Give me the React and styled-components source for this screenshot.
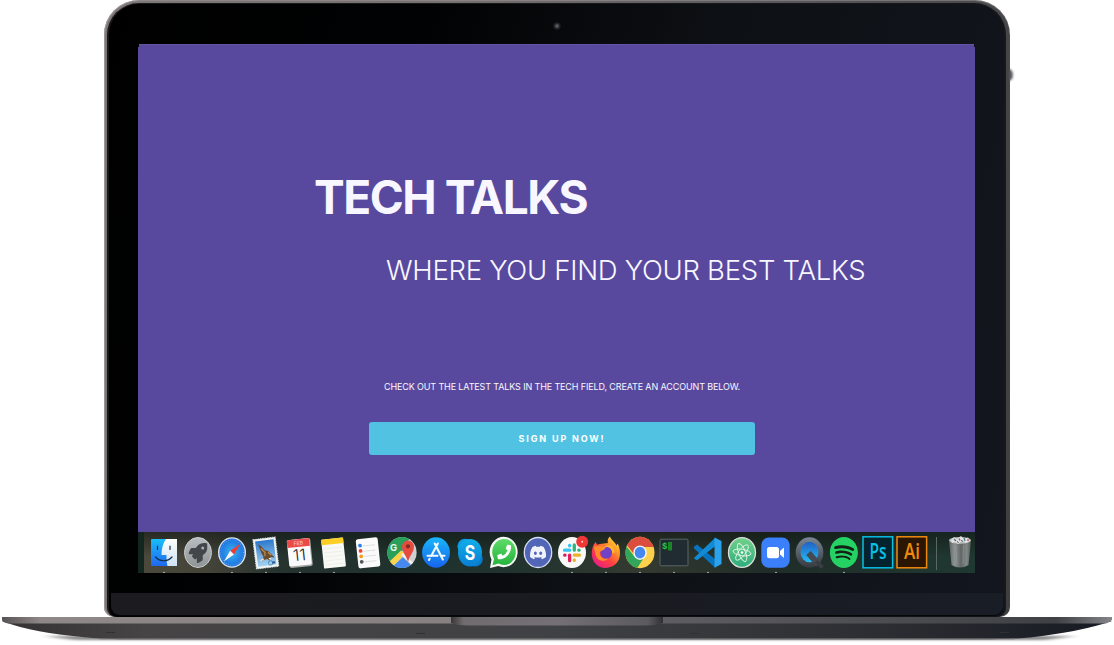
import React from "react";
import styled, { createGlobalStyle } from "styled-components";
import { FaDiscord, FaSpotify, FaPhoneAlt, FaRocket } from "react-icons/fa";

const GlobalStyle = createGlobalStyle`
  * { box-sizing: border-box; }
  body { margin: 0; background: #fff; overflow: hidden; font-family: Inter, "Liberation Sans", sans-serif; }
`;

const Laptop = styled.main`
  position: relative;
  width: 1114px;
  height: 645px;
  display: flex;
  flex-direction: column;
  align-items: center;
`;

const Lid = styled.section`
  width: 906px;
  height: 617px;
  padding: 3px 4px 0 3px;
  border-radius: 35px 35px 10px 10px;
  background: linear-gradient(100deg, #7d7676 0%, #766f70 35%, #5c5b5e 60%, #3d3e42 100%);
  box-shadow: inset 0 1px 1px #a19b9b80, inset 1px 0 1px #a09b9b;
`;

const Bezel = styled.div`
  width: 100%;
  height: 614px;
  display: flex;
  flex-direction: column;
  align-items: flex-start;
  padding: 40px 0 0 29px;
  border: solid #18181a;
  border-width: 1px 2px 0 2px;
  border-radius: 32px 32px 9px 9px;
  background: linear-gradient(105deg, #000 0%, #010203 30%, #0d1014 58%, #13161e 100%);
`;

const Camera = styled.span`
  position: absolute;
  left: 553px;
  top: 22px;
  width: 8px;
  height: 8px;
  border-radius: 50%;
  border: 1px solid #17191d;
  background: radial-gradient(circle, #555a61 0 1px, #24272c 2.5px);
`;

const Knob = styled.span`
  position: absolute;
  left: 1008px;
  top: 69px;
  width: 5px;
  height: 12px;
  border-radius: 0 5px 5px 0;
  background: linear-gradient(90deg, #3c3d40, #77777a);
  filter: blur(0.8px);
`;

const Screen = styled.div`
  width: 837px;
  height: 529px;
  flex: none;
  display: flex;
  flex-direction: column;
  background: #59499e;
  border-top: 1px solid #6253a4;
  clip-path: polygon(1px 0, 836px 0, 836px 3px, 100% 3px, 100% 100%, 0 100%, 0 3px, 1px 3px);
`;

const Hero = styled.div`
  height: 487px;
  display: flex;
  flex-direction: column;
  align-items: flex-start;
  padding-top: 124px;
  color: #f8f7ff;
  white-space: nowrap;
`;

const Title = styled.h1`
  margin: 0 0 0 176px;
  font-size: 46px;
  line-height: 56px;
  font-weight: 700;
  letter-spacing: -1.45px;
`;

const Subtitle = styled.h2`
  margin: 30px 0 0 248px;
  font-size: 27.5px;
  line-height: 30px;
  font-weight: 300;
  letter-spacing: -0.27px;
`;

const Note = styled.p`
  margin: 95px 0 0 246px;
  font-size: 9px;
  line-height: 14px;
  font-weight: 400;
  letter-spacing: -0.13px;
`;

const SignUp = styled.button`
  margin: 28px 0 0 231px;
  width: 386px;
  height: 33px;
  padding: 0;
  border: 0;
  border-radius: 3px;
  background: #51c2e2;
  color: #fff;
  font: 700 9px/33px Inter, sans-serif;
  letter-spacing: 1.85px;
`;

const Dock = styled.div`
  height: 41px;
  display: flex;
  padding-left: 9px;
  background:
    linear-gradient(90deg, #12251f 0 6px, transparent 6px),
    linear-gradient(180deg, #1117139c, transparent 60%),
    linear-gradient(90deg, #4c493c 0, #454439 8%, #26332f 17%, #1e322e 35%, #24342f 48%, #343a30 60%, #202d28 75%, #203832 100%);
`;

const Slot = styled.svg`
  width: 34px;
  height: 41px;
  flex: none;
  display: block;
  overflow: visible;
`;

const Divider = styled.i`
  flex: none;
  width: 1px;
  height: 33px;
  margin: 5px 6px 0 7px;
  background: #5a6762;
`;

const Chin = styled.div`
  width: 892px;
  height: 22px;
  flex: none;
  margin: 20px 0 0 -27px;
  border-radius: 0 0 9px 9px;
  background: linear-gradient(90deg, #1c1b20, #191b20 50%, #191d26);
  box-shadow: 0 1px 1px #050608;
`;

const Base = styled.svg`
  width: 1114px;
  height: 28px;
  flex: none;
  display: block;
`;

const Dot = () => <circle cx="17" cy="40.6" r="0.8" fill="#bcc4bf" />;

const Glyph = ({ icon: Icon, x, y, w, h, color }) => (
  <g transform={`translate(${x} ${y}) scale(${w / 20} ${h / 20})`}>
    <Icon size={20} color={color} />
  </g>
);

function Finder() {
  return (
    <Slot viewBox="0 0 34 41">
      <defs>
        <linearGradient id="fl" x2="0" y2="1"><stop stopColor="#19bdfb" /><stop offset="1" stopColor="#2168ef" /></linearGradient>
        <linearGradient id="fr" x2="0" y2="1"><stop stopColor="#fdfefe" /><stop offset="1" stopColor="#cfe2f5" /></linearGradient>
      </defs>
      <rect x="4" y="7" width="26" height="27" rx="1" fill="url(#fl)" />
      <path d="M19 7H30V34H20.5C19.6 30 19.4 27 19.5 23H14.5C14.6 16 16 11 19 7Z" fill="url(#fr)" />
      <path d="M10.5 14v3.5M23 14v3.5" stroke="#14324e" strokeWidth="1.2" strokeLinecap="round" />
      <path d="M8.5 25C13 30 20.5 30 25 25" fill="none" stroke="#122f4b" strokeWidth="1.2" strokeLinecap="round" />
      <Dot />
    </Slot>
  );
}

function Launchpad() {
  return (
    <Slot viewBox="0 0 34 41">
      <defs><linearGradient id="lp" x2="0" y2="1"><stop stopColor="#b8bdc0" /><stop offset="1" stopColor="#8f9496" /></linearGradient></defs>
      <ellipse cx="17" cy="20.5" rx="13.5" ry="15" fill="url(#lp)" stroke="#c9cdcf" />
      <Glyph icon={FaRocket} x={7.5} y={11} w={19} h={20} color="#43474b" />
    </Slot>
  );
}

function Safari() {
  return (
    <Slot viewBox="0 0 34 41">
      <defs><radialGradient id="sf"><stop stopColor="#38b5ee" /><stop offset="1" stopColor="#1c70e1" /></radialGradient></defs>
      <ellipse cx="17" cy="20.5" rx="14" ry="15.3" fill="#dfe4e8" />
      <ellipse cx="17" cy="20.5" rx="12.6" ry="14" fill="url(#sf)" />
      <ellipse cx="17" cy="20.5" rx="11.4" ry="12.7" fill="none" stroke="#9dd1f7" strokeWidth="1.1" strokeOpacity=".7" strokeDasharray=".6 1.6" />
      <path d="M25.5 11.5 15.2 18.8 19 22.5Z" fill="#f33b36" />
      <path d="M8.8 29.5 15.2 18.8 19 22.5Z" fill="#f4f6f8" />
      <Dot />
    </Slot>
  );
}

function Mail() {
  return (
    <Slot viewBox="0 0 34 41">
      <defs><linearGradient id="ml" x2="0" y2="1"><stop stopColor="#2d79cd" /><stop offset="1" stopColor="#a7d2ee" /></linearGradient></defs>
      <g transform="rotate(-7 17 20.5)">
        <rect x="5.5" y="6.2" width="22.5" height="29.5" fill="#f1f4f4" stroke="#d9e0e2" strokeWidth="1" strokeDasharray="1.4 1" />
        <rect x="7.5" y="8.3" width="18.5" height="25.3" fill="url(#ml)" />
        <path d="M10 11.5C13 13 14.5 16 16.5 18.5L19 19 22 22.5 25 26.5 21 25.5 19.5 29 17.5 27 12 28 14 24.5 12.5 21Z" fill="#6a4b2c" />
        <path d="M12.5 16 16 20.5 15.5 24M19 20.5 22 24" stroke="#b98c50" strokeWidth="1.3" fill="none" />
        <path d="M10.5 28l3.5-1.5M19 27l2.3.3" stroke="#f3e8d0" strokeWidth="1.3" />
        <circle cx="20.3" cy="31.4" r="2.2" fill="none" stroke="#4486b9" strokeWidth=".8" />
        <path d="M22 31.3h3" stroke="#285c97" strokeWidth="2.2" />
      </g>
      <Dot />
    </Slot>
  );
}

function Calendar() {
  return (
    <Slot viewBox="0 0 34 41">
      <g transform="rotate(-6 17 20.5)">
        <rect x="5.5" y="7" width="23" height="28" rx="2" fill="#a7a9a8" />
        <rect x="5" y="7" width="22.5" height="26.5" rx="1.5" fill="#fafafa" />
        <path d="M5 14.7V8.5Q5 7 6.5 7H26Q27.5 7 27.5 8.5V14.7Z" fill="#ea4b48" />
        <text x="16.2" y="12.9" fontSize="5.2" textAnchor="middle" fill="#ffd8d3">FEB</text>
        <text x="16.2" y="28.6" fontSize="16" fontWeight="300" textAnchor="middle" fill="#222" textLength="13" lengthAdjust="spacingAndGlyphs">11</text>
      </g>
      <Dot />
    </Slot>
  );
}

function Notes() {
  return (
    <Slot viewBox="0 0 34 41">
      <g transform="rotate(-6 17 20.5)">
        <rect x="5.5" y="6.5" width="22" height="29" rx="1" fill="#f8f8f5" />
        <path d="M5.5 6.5h22v5.5h-22Z" fill="#fdcf24" />
        <path d="M7 16h19M7 20h19M7 24h19M7 28h19M7 32h19" stroke="#e6e6e2" strokeWidth=".5" />
      </g>
      <Dot />
    </Slot>
  );
}

function Reminders() {
  return (
    <Slot viewBox="0 0 34 41">
      <g transform="rotate(-6 17 20.5)">
        <rect x="6" y="6.2" width="22" height="29.3" rx="2" fill="#fafafa" />
        <path d="M12.5 13.5h12M12.5 18.8h12M12.5 24h12M12.5 29.5h12" stroke="#d2d3d3" strokeWidth=".7" />
        <circle cx="9.8" cy="12.8" r="1.9" fill="#2582ed" />
        <circle cx="9.8" cy="18.2" r="1.9" fill="#ef4434" />
        <circle cx="9.8" cy="23.7" r="1.9" fill="#f49a20" />
        <circle cx="9.8" cy="29.1" r="1.9" fill="#54565a" />
      </g>
    </Slot>
  );
}

function Maps() {
  return (
    <Slot viewBox="0 0 34 41">
      <clipPath id="mp"><ellipse cx="17" cy="20.5" rx="14.6" ry="15.6" /></clipPath>
      <g clipPath="url(#mp)">
        <path d="M0 4H34V37H0Z" fill="#cfcfd0" />
        <path d="M0 4H26L16 21 4 32H0Z" fill="#2a9f5a" />
        <path d="M5 37 18 25 30 37Z" fill="#4589ee" />
        <path d="M2 32 16 18.5 20 22 6 36Z" fill="#fbd34b" />
        <path d="M17 22 32 36" stroke="#f0efef" strokeWidth="3" />
      </g>
      <path d="M23 31C22.2 24 17 20.5 17 14.5a6 6 0 0 1 12 0C29 20.5 23.8 24 23 31Z" fill="#e64c3e" />
      <circle cx="23" cy="14.3" r="2.1" fill="#812b25" />
      <text x="5" y="19.4" fontSize="9.5" fontWeight="700" fill="#e9f5ec">G</text>
    </Slot>
  );
}

function AppStore() {
  return (
    <Slot viewBox="0 0 34 41">
      <defs><linearGradient id="as" x2="0" y2="1"><stop stopColor="#19b7fb" /><stop offset="1" stopColor="#1764ed" /></linearGradient></defs>
      <ellipse cx="17" cy="20.5" rx="13.9" ry="15.3" fill="url(#as)" />
      <path d="M15.7 11.5 23.8 27.5M18.8 11.5 12.2 24M10.6 26.8 10 28M8.5 23.7h10M22 23.7h3.5" stroke="#f3faff" strokeWidth="2.1" strokeLinecap="round" fill="none" />
    </Slot>
  );
}

function Skype() {
  return (
    <Slot viewBox="0 0 34 41">
      <defs><linearGradient id="sk" x2="0" y2="1"><stop stopColor="#12aeea" /><stop offset="1" stopColor="#087fd3" /></linearGradient></defs>
      <circle cx="12" cy="14.3" r="7.6" fill="#0d9be2" /><circle cx="22.2" cy="27" r="7.6" fill="#0a79ca" />
      <ellipse cx="17" cy="20.7" rx="12" ry="13.7" fill="url(#sk)" />
      <text x="17" y="27.9" fontSize="20" fontWeight="700" textAnchor="middle" fill="#fff" textLength="10.5" lengthAdjust="spacingAndGlyphs">S</text>
    </Slot>
  );
}

function WhatsApp() {
  return (
    <Slot viewBox="0 0 34 41">
      <defs><linearGradient id="wa" x2="0" y2="1"><stop stopColor="#5fdb69" /><stop offset="1" stopColor="#24b33c" /></linearGradient></defs>
      <path d="M3 36 4.5 27.5A14 15.2 0 1 1 11.3 34Z" fill="#f5f7f5" />
      <path d="M5.5 33.2 7 27A11.8 13.1 0 1 1 11.5 31.6Z" fill="url(#wa)" />
      <g transform="translate(34.5 0) scale(-1 1)">
        <Glyph icon={FaPhoneAlt} x={10.3} y={12.5} w={14} h={15} color="#fff" />
      </g>
    </Slot>
  );
}

function Discord() {
  return (
    <Slot viewBox="0 0 34 41">
      <ellipse cx="17" cy="20.5" rx="13.7" ry="15" fill="#5266b8" stroke="#d7dcf1" strokeWidth="1.3" />
      <Glyph icon={FaDiscord} x={8.3} y={11} w={17.5} h={19} color="#f1f3fb" />
    </Slot>
  );
}

function Slack() {
  return (
    <Slot viewBox="0 0 34 41">
      <ellipse cx="17" cy="20.5" rx="14" ry="15.4" fill="#f9f9f8" />
      <g strokeWidth="3.3" strokeLinecap="round">
        <path d="M14.6 13.5v.3M9.5 18.2h5.2" stroke="#36c5f0" />
        <path d="M19.3 13v5.2M23.8 18.2h.3" stroke="#2eb67d" />
        <path d="M9.7 23.2h.3M14.6 23.2v5.5" stroke="#e01e5a" />
        <path d="M19.3 23.2h5.2M19.3 28v.4" stroke="#ecb22e" />
      </g>
      <circle cx="27.2" cy="9.7" r="6" fill="#ef3735" /><circle cx="27.2" cy="9.7" r="1" fill="#ffd5cc" />
      <Dot />
    </Slot>
  );
}

function Firefox() {
  return (
    <Slot viewBox="0 0 34 41">
      <defs><linearGradient id="ff" x1="1" x2=".2" y2="1"><stop stopColor="#fff34a" /><stop offset=".35" stopColor="#ff9827" /><stop offset=".65" stopColor="#ff4242" /><stop offset="1" stopColor="#e81a87" /></linearGradient></defs>
      <path d="M4.5 13 6.7 10 8 12.7 11 12 19 11C18 8.5 19 6 21 4.5 22 8 25.5 9.5 27.5 13.5L28.7 11.5C32 18 32 27 27 31.8 21.5 37.3 11.5 37.3 6.5 31.7 2 27 2 19 4.5 13Z" fill="url(#ff)" />
      <ellipse cx="17.3" cy="20.5" rx="5.8" ry="6.3" fill="#7042c8" />
      <path d="M4.7 14.5 11 14 17 15.3 14.5 18 11 19.5C9.5 24 14 28 19.5 26.5 14.5 31 7.5 28.5 6.5 22Z" fill="#ff8c28" />
      <path d="M14 16C18 13.5 24 16 23 21.5L25.8 20C25 13 19 11 14 16Z" fill="#ffb52e" />
      <Dot />
    </Slot>
  );
}

function Chrome() {
  return (
    <Slot viewBox="0 0 34 41">
      <clipPath id="ch"><ellipse cx="17" cy="20.5" rx="14.5" ry="15.7" /></clipPath>
      <g clipPath="url(#ch)">
        <path d="M0 4h34v34H0Z" fill="#fdd14b" />
        <path d="M0 10 11 24 20 27 13 38H0Z" fill="#32a65a" />
        <path d="M3 12 0 3H34V15H17L11 22Z" fill="#db4d3f" />
      </g>
      <ellipse cx="17" cy="20.7" rx="6.7" ry="7.3" fill="#f5f7f8" /><ellipse cx="17" cy="20.7" rx="5.3" ry="5.9" fill="#4688ef" />
      <Dot />
    </Slot>
  );
}

function Terminal() {
  return (
    <Slot viewBox="0 0 34 41">
      <rect x="3" y="7.2" width="28" height="26.6" rx="1" fill="#202b32" stroke="#59646a" strokeWidth="1" />
      <text x="5" y="17.4" fontFamily="Liberation Mono, monospace" fontWeight="700" fontSize="9" fill="#28c940">$</text>
      <rect x="11" y="10" width="4" height="8.5" fill="#188629" />
      <Dot />
    </Slot>
  );
}

function Code() {
  return (
    <Slot viewBox="0 0 34 41">
      <path d="M3 14.8 6 12.5 24.5 27.5V36L3 16.5Z" fill="#0873be" />
      <path d="M3 26 24.5 5.5V14L6 28.3 3 26.5Z" fill="#118bd3" />
      <path d="M23.5 5.5 30.5 9V32L23.5 35.8Z" fill="#2ba3ec" />
      <Dot />
    </Slot>
  );
}

function Atom() {
  return (
    <Slot viewBox="0 0 34 41">
      <defs><linearGradient id="at" x2="0" y2="1"><stop stopColor="#73d08a" /><stop offset="1" stopColor="#2cad7c" /></linearGradient></defs>
      <ellipse cx="17" cy="20.5" rx="13.5" ry="14.9" fill="url(#at)" stroke="#d9dedb" strokeWidth="1.3" />
      <g fill="none" stroke="#e3f5e8" strokeWidth=".9">
        <ellipse cx="17" cy="20.5" rx="3.4" ry="9.6" transform="rotate(-22 17 20.5)" />
        <ellipse cx="17" cy="20.5" rx="3.4" ry="9.4" transform="rotate(38 17 20.5)" />
        <ellipse cx="17" cy="20.5" rx="3.2" ry="9" transform="rotate(99 17 20.5)" />
      </g>
      <circle cx="17" cy="20.5" r="1.2" fill="#fff" />
    </Slot>
  );
}

function Zoom() {
  return (
    <Slot viewBox="0 0 34 41">
      <rect x="2.3" y="5.5" width="28.4" height="30.3" rx="7.5" fill="#3c7ffa" />
      <rect x="8" y="15" width="12" height="11.2" rx="2.5" fill="#fff" />
      <path d="M21 19 25 15.5V26L21 22.4Z" fill="#fff" />
      <Dot />
    </Slot>
  );
}

function QuickTime() {
  return (
    <Slot viewBox="0 0 34 41">
      <defs>
        <linearGradient id="qt" x2="0" y2="1"><stop stopColor="#7b8795" /><stop offset="1" stopColor="#35383e" /></linearGradient>
        <linearGradient id="qb" x2="0" y2="1"><stop stopColor="#245fc4" /><stop offset="1" stopColor="#20bdf6" /></linearGradient>
      </defs>
      <ellipse cx="16.5" cy="20.5" rx="13.8" ry="15.3" fill="url(#qt)" />
      <ellipse cx="16.5" cy="20" rx="9" ry="10.3" fill="url(#qb)" />
      <path d="M15.5 21 25.5 32.5" stroke="#454950" strokeWidth="6" />
      <path d="M23 29.5 29.5 35.5" stroke="#393d43" strokeWidth="4" />
    </Slot>
  );
}

function Spotify() {
  return (
    <Slot viewBox="0 0 34 41">
      <ellipse cx="17" cy="20.5" rx="13" ry="14" fill="#142118" />
      <Glyph icon={FaSpotify} x={2.4} y={4.6} w={29} h={32} color="#24d363" />
      <Dot />
    </Slot>
  );
}

function AdobeTile({ label, color, fill, width }) {
  return (
    <Slot viewBox="0 0 34 41">
      <rect x="2" y="4.8" width="29.6" height="31" fill={fill} stroke={color} strokeWidth="1.5" />
      <text x="17" y="27.3" textAnchor="middle" fontFamily="Open Sans, sans-serif" fontWeight="600" fontSize="21" textLength={width} lengthAdjust="spacingAndGlyphs" fill={color}>{label}</text>
    </Slot>
  );
}

function Trash() {
  return (
    <Slot viewBox="0 0 34 41">
      <defs><linearGradient id="tr"><stop stopColor="#646968" /><stop offset=".25" stopColor="#9a9e9d" /><stop offset=".55" stopColor="#686d6c" /><stop offset=".8" stopColor="#8d9290" /><stop offset="1" stopColor="#5b605f" /></linearGradient></defs>
      <path d="M6 8 8.5 33Q17 38 25.5 33L28 8Z" fill="url(#tr)" opacity=".9" />
      <ellipse cx="17" cy="8.3" rx="11" ry="3.4" fill="#b9bdbb" />
      <path d="M8 8 11 5 14 7 18 4 21 7 25 5.5 27 9 23 11 19 9 15 12 12 10 9 11Z" fill="#dfe2e0" />
      <path d="M11 7l2 2M21 6l1 3" stroke="#4f738e" strokeWidth="1.2" /><path d="M16 6.5l1 2M25 7v2" stroke="#a94e3c" strokeWidth="1.2" /><path d="M14 9.5l1.5 1M18.5 8l1 1.5" stroke="#3b403e" strokeWidth="1" />
      <path d="M13 13.5 14 32M20.5 13 20 32" stroke="#c0c4c240" />
    </Slot>
  );
}

function LaptopBase() {
  return (
    <Base viewBox="0 617 1114 28">
      <defs>
        <linearGradient id="rim"><stop stopColor="#575354" /><stop offset=".035" stopColor="#8f8889" /><stop offset=".4" stopColor="#878182" /><stop offset=".6" stopColor="#5e5d61" /><stop offset=".95" stopColor="#404145" /><stop offset="1" stopColor="#85868a" /></linearGradient>
        <linearGradient id="body"><stop stopColor="#343233" /><stop offset=".13" stopColor="#464445" /><stop offset=".5" stopColor="#404144" /><stop offset=".8" stopColor="#2b2d32" /><stop offset="1" stopColor="#171a22" /></linearGradient>
        <linearGradient id="notch"><stop stopColor="#383638" /><stop offset=".06" stopColor="#716c6e" /><stop offset=".5" stopColor="#747074" /><stop offset=".93" stopColor="#5b5a5f" /><stop offset="1" stopColor="#302f32" /></linearGradient>
        <filter id="soft" x="-5%" y="-200%" width="110%" height="500%"><feGaussianBlur stdDeviation="5 1.2" /></filter>
      </defs>
      <path d="M45 636H1075L1045 640H75Z" fill="#555" opacity=".7" filter="url(#soft)" />
      <path d="M2 621C26 630 51 634 82 637Q102 639.3 135 639.3H979Q1010 639.3 1030 637.4 1080 632 1112 621Z" fill="url(#body)" />
      <path d="M100 638.8H1015" stroke="#737375" strokeWidth="1" />
      <path d="M2 617H1112V620Q1109 622 1106 623.5H8Q2 622 2 620Z" fill="url(#rim)" />
      <path d="M451 617H663V623Q656 625.5 645 625.5H469Q457 625.5 451 623Z" fill="url(#notch)" />
      <path d="M106 632.5h9M416 633.5h9M690 633.5h9M1000 632.5h9" stroke="#303032" />
    </Base>
  );
}

export default function App() {
  return (
    <Laptop>
      <GlobalStyle />
      <Knob />
      <Lid>
        <Bezel>
          <Screen>
            <Hero>
              <Title>TECH TALKS</Title>
              <Subtitle>WHERE YOU FIND YOUR BEST TALKS</Subtitle>
              <Note>CHECK OUT THE LATEST TALKS IN THE TECH FIELD, CREATE AN ACCOUNT BELOW.</Note>
              <SignUp>SIGN UP NOW!</SignUp>
            </Hero>
            <Dock>
              <Finder /><Launchpad /><Safari /><Mail /><Calendar /><Notes /><Reminders /><Maps />
              <AppStore /><Skype /><WhatsApp /><Discord /><Slack /><Firefox /><Chrome /><Terminal />
              <Code /><Atom /><Zoom /><QuickTime /><Spotify />
              <AdobeTile label="Ps" color="#08bfe4" fill="#03242f" width="17" />
              <AdobeTile label="Ai" color="#f18a0c" fill="#2a1603" width="16" />
              <Divider />
              <Trash />
            </Dock>
          </Screen>
          <Chin />
        </Bezel>
      </Lid>
      <Camera />
      <LaptopBase />
    </Laptop>
  );
}
